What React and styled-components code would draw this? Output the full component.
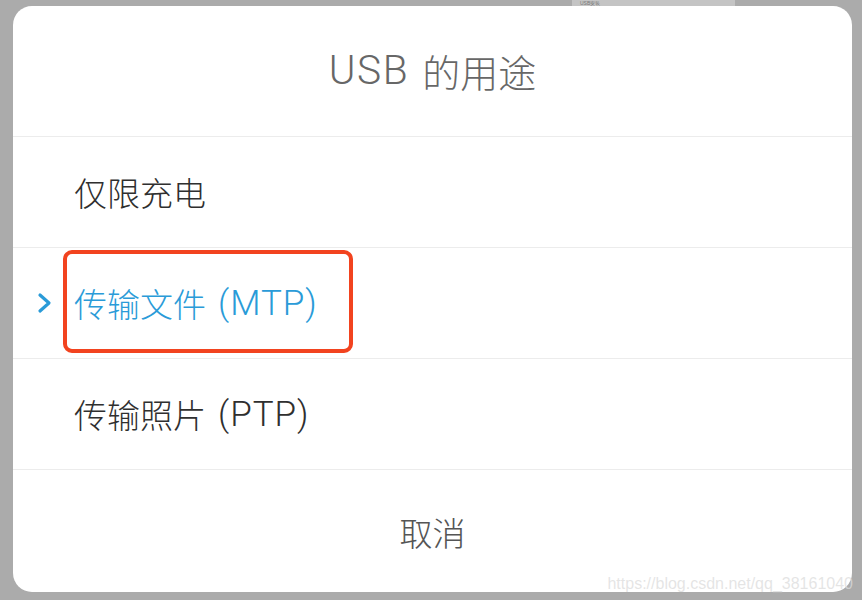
import React from "react";
import styled, { createGlobalStyle } from "styled-components";

const Global = createGlobalStyle`
  html, body { margin: 0; padding: 0; }
  body {
    background: #ababab;
    width: 862px;
    height: 600px;
    overflow: hidden;
    font-family: Roboto, "Noto Sans CJK SC", sans-serif;
  }
`;

const Page = styled.div`
  position: relative;
  width: 862px;
  height: 600px;
  box-sizing: border-box;
  padding: 6px 10px 0 13px;
`;

const BackStrip = styled.div`
  position: absolute;
  top: 0;
  left: 572px;
  width: 163px;
  height: 8px;
  background: #c4c4c4;
  font-family: "Liberation Sans", sans-serif;
  font-size: 5px;
  color: #777;
  padding-left: 8px;
  box-sizing: border-box;
  line-height: 6px;
`;

const Dialog = styled.div`
  position: relative;
  width: 839px;
  height: 586px;
  background: #fff;
  border-radius: 19px;
  display: flex;
  flex-direction: column;
  overflow: hidden;
`;

const Title = styled.div`
  height: 131px;
  box-sizing: border-box;
  display: flex;
  align-items: center;
  justify-content: center;
  gap: 13px;
  font-size: 38px;
  font-weight: 300;
  color: #676767;
  border-bottom: 1px solid #ececec;
  padding-bottom: 2px;
`;

const Latin = styled.span`
  font-size: ${(p) => p.$scale || 1.06}em;
  letter-spacing: ${(p) => p.$track || 1}px;
`;

const Option = styled.div`
  position: relative;
  height: 111px;
  box-sizing: border-box;
  border-bottom: 1px solid #ececec;
  display: flex;
  align-items: center;
  gap: 12px;
  padding-left: 24px;
  font-size: 33px;
  font-weight: 300;
  color: ${(p) => (p.$active ? "#2a9bd8" : "#2f2f2f")};
`;

const Marker = styled.span`
  width: 37px;
  margin-right: -12px;
  flex: none;
  display: flex;
  align-items: center;
`;

const Chevron = styled.svg`
  width: 16px;
  height: 22px;
`;

const Highlight = styled.div`
  position: absolute;
  left: 50px;
  top: 2px;
  width: 290px;
  height: 103px;
  box-sizing: border-box;
  border: 4px solid #f2431f;
  border-radius: 9px;
`;

const Cancel = styled.div`
  flex: 1;
  display: flex;
  align-items: center;
  justify-content: center;
  font-size: 33px;
  font-weight: 300;
  color: #555;
  padding-top: 2px;
`;

const Watermark = styled.div`
  position: absolute;
  right: 9px;
  bottom: 7px;
  font-family: "Liberation Sans", Arial, sans-serif;
  font-size: 16px;
  color: rgba(220, 220, 220, 0.75);
`;

const options = [
  { label: "仅限充电" },
  { label: "传输文件", latin: "(MTP)", active: true },
  { label: "传输照片", latin: "(PTP)" },
];

export default function App() {
  return (
    <>
      <Global />
      <Page>
        <BackStrip>USB安装</BackStrip>
        <Dialog>
          <Title>
            <Latin $scale={1.07} $track={1.5}>USB</Latin>
            <span>的用途</span>
          </Title>
          {options.map((o) => (
            <Option key={o.label} $active={o.active}>
              <Marker>
                {o.active && (
                  <Chevron viewBox="0 0 16 22">
                    <polyline
                      points="3,3 12,11 3,19"
                      fill="none"
                      stroke="#2a9bd8"
                      strokeWidth="3.2"
                      strokeLinecap="round"
                      strokeLinejoin="round"
                    />
                  </Chevron>
                )}
              </Marker>
              <span>{o.label}</span>
              {o.latin && <Latin>{o.latin}</Latin>}
              {o.active && <Highlight />}
            </Option>
          ))}
          <Cancel>取消</Cancel>
        </Dialog>
        <Watermark>https://blog.csdn.net/qq_38161040</Watermark>
      </Page>
    </>
  );
}
